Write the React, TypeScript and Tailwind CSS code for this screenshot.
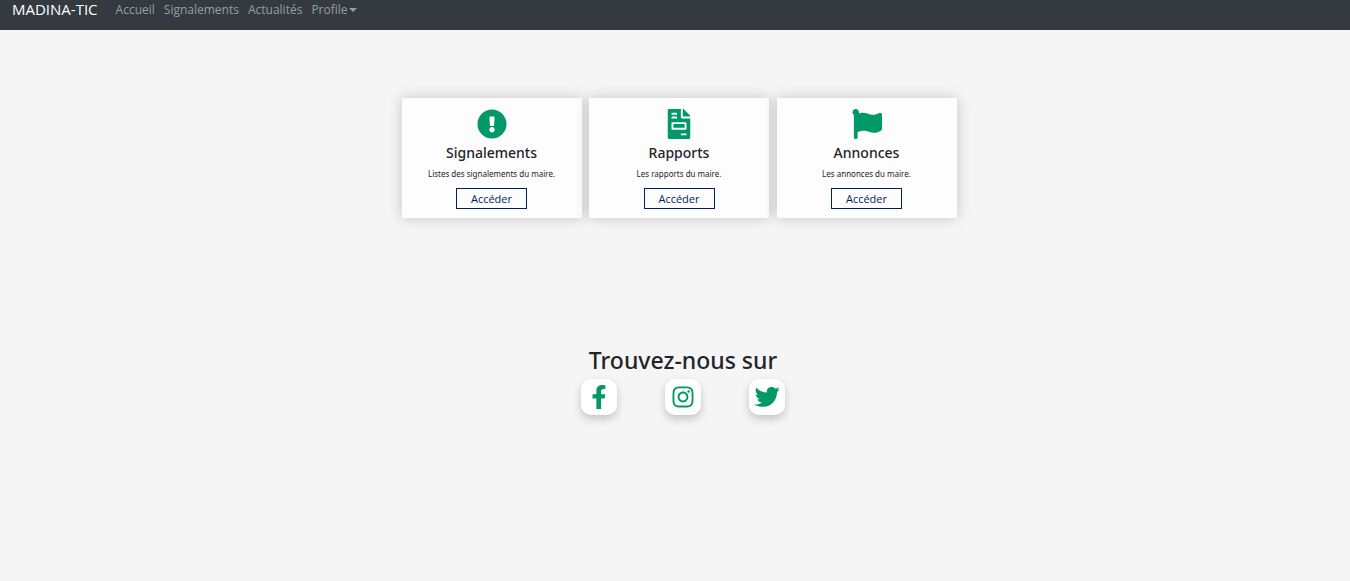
import type { ComponentType } from 'react';
import type { IconType } from 'react-icons';
import {
  FaExclamationCircle,
  FaFacebookF,
  FaFileInvoice,
  FaFlag,
  FaInstagram,
} from 'react-icons/fa';

const navLinks = ['Accueil', 'Signalements', 'Actualités'];

const services: { title: string; text: string; Icon: IconType }[] = [
  { title: 'Signalements', text: 'Listes des signalements du maire.', Icon: FaExclamationCircle },
  { title: 'Rapports', text: 'Les rapports du maire.', Icon: FaFileInvoice },
  { title: 'Annonces', text: 'Les annonces du maire.', Icon: FaFlag },
];

function BirdIcon() {
  return (
    <svg viewBox="0 0 26 20" width={26} height={20} fill="currentColor" aria-hidden="true">
      <path d="M2.2.4C5 3.5 8.600 5.200 12.800 5.500C12.300 2.400 14.400.1 17.500.1C19 .1 20.200.6 21.200 1.600C22.600 1.400 23.900.9 25.200.2C24.700 1.500 24 2.300 23 2.900C24 2.900 24.900 2.700 25.800 2.300C25 3.500 24.100 4.300 23 5C23.100 12.900 17.400 19.800 9.200 19.800C5.700 19.800 2.600 19.100 0 17.500C3 17.800 5.700 17.100 7.900 15.500C5.600 15.200 4 14 3.400 12.200C4.200 12.300 5 12.300 5.700 12.100C3.400 11.400 1.900 9.700 1.900 7.300C2.600 7.700 3.300 7.900 4.100 7.900C1.700 6.100 1.100 3 2.200.4Z" />
    </svg>
  );
}

const socials: { name: string; Icon: ComponentType }[] = [
  { name: 'Facebook', Icon: () => <FaFacebookF size={24} /> },
  { name: 'Instagram', Icon: () => <FaInstagram size={24} /> },
  { name: 'Twitter', Icon: BirdIcon },
];

function Navbar() {
  return (
    <nav className="flex h-[30px] items-start bg-[#343a40] px-3 font-['Open_Sans',sans-serif] text-[12px] leading-5 text-[#9a9da0]">
      <a href="#" className="mr-[18px] text-[15px] leading-[18px] text-white">MADINA-TIC</a>
      <div className="flex gap-[9px]">
        {navLinks.map((label) => (
          <a key={label} href="#">{label}</a>
        ))}
        <button type="button" className="flex items-center gap-px">
          Profile
          <span className="border-x-[4px] border-t-[4px] border-x-transparent border-t-current" />
        </button>
      </div>
    </nav>
  );
}

export default function App() {
  return (
    <div className="min-h-screen bg-[#f5f5f5] font-['Noto_Sans',sans-serif] text-[#212529]">
      <Navbar />
      <main>
        <section className="pt-[68px] pl-2">
          <div className="mx-auto flex max-w-[555px] flex-wrap justify-between gap-y-2">
            {services.map(({ title, text, Icon }) => (
              <article
                key={title}
                className="flex h-[120px] w-[180px] flex-col items-center bg-[#fdfdfd] pt-[11px] shadow-[0_0_13px_rgba(0,0,0,0.2)]"
              >
                <Icon size={30} className="text-[#009967]" />
                <h2 className="mt-1 text-[14px] leading-5 font-medium">{title}</h2>
                <p className="mt-[5px] text-[8px] leading-3">{text}</p>
                <button
                  type="button"
                  className="mt-2 flex h-[21px] w-[71px] items-center justify-center border border-[#001f5f] font-['Open_Sans',sans-serif] text-[11px] leading-4 text-[#001f5f]"
                >
                  Accéder
                </button>
              </article>
            ))}
          </div>
        </section>
        <section className="flex flex-col items-center pt-[128px] pl-4">
          <h2 className="text-[23px] leading-[29px] font-medium">Trouvez-nous sur</h2>
          <div className="mt-1 flex gap-12">
            {socials.map(({ name, Icon }) => (
              <a
                key={name}
                href="#"
                aria-label={name}
                className="flex size-9 items-center justify-center rounded-[10px] bg-white text-[#009967] shadow-[0_4px_8px_rgba(0,0,0,0.2)]"
              >
                <Icon />
              </a>
            ))}
          </div>
        </section>
      </main>
    </div>
  );
}
